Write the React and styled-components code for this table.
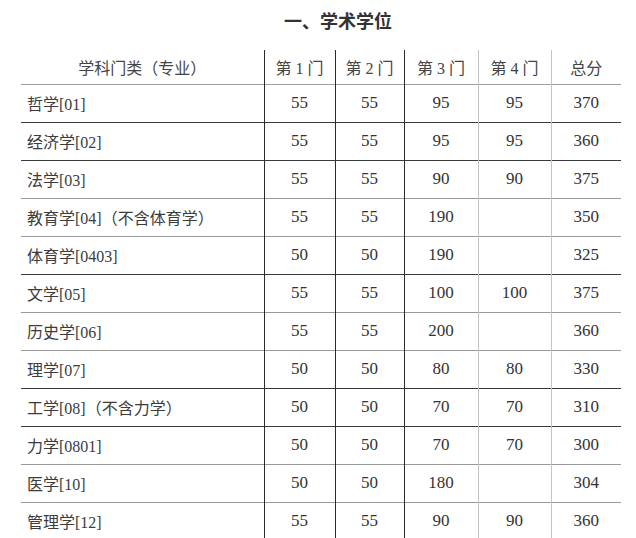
import React from "react";
import styled, { createGlobalStyle } from "styled-components";

const rows = [
    { name: "哲学[01]", s: ["55", "55", "95", "95", "370"], line: "dark" },
    { name: "经济学[02]", s: ["55", "55", "95", "95", "360"], line: "dark" },
    { name: "法学[03]", s: ["55", "55", "90", "90", "375"], line: "gray" },
    { name: "教育学[04]（不含体育学）", s: ["55", "55", "190", "", "350"], line: "gray" },
    { name: "体育学[0403]", s: ["50", "50", "190", "", "325"], line: "dark" },
    { name: "文学[05]", s: ["55", "55", "100", "100", "375"], line: "gray" },
    { name: "历史学[06]", s: ["55", "55", "200", "", "360"], line: "gray" },
    { name: "理学[07]", s: ["50", "50", "80", "80", "330"], line: "dark" },
    { name: "工学[08]（不含力学）", s: ["50", "50", "70", "70", "310"], line: "dark" },
    { name: "力学[0801]", s: ["50", "50", "70", "70", "300"], line: "gray" },
    { name: "医学[10]", s: ["50", "50", "180", "", "304"], line: "gray" },
    { name: "管理学[12]", s: ["55", "55", "90", "90", "360"], line: "light" },
];

const heads = ["第 1 门", "第 2 门", "第 3 门", "第 4 门", "总分"];
const widths = [71, 69, 74, 73, 70];

const lineColors = {
    dark: "#3a3a3a",
    gray: "#9a9a9a",
    light: "#dcdcdc",
};

function App() {
    return (
        <Page>
            <GlobalStyle />
            <Title>一、学术学位</Title>
            <Table>
                <colgroup>
                    <col style={{ width: 243 }} />
                    {widths.map((w, i) => (
                        <col key={i} style={{ width: w }} />
                    ))}
                </colgroup>
                <thead>
                    <HeadRow>
                        <HeadCell>学科门类（专业）</HeadCell>
                        {heads.map((h, i) => (
                            <HeadCell key={h} $soft={i >= 3}>
                                {h}
                            </HeadCell>
                        ))}
                    </HeadRow>
                </thead>
                <tbody>
                    {rows.map((r) => (
                        <Row key={r.name} $line={lineColors[r.line]}>
                            <NameCell>{r.name}</NameCell>
                            {r.s.map((v, i) => (
                                <NumCell key={i} $soft={i >= 3}>
                                    {v}
                                </NumCell>
                            ))}
                        </Row>
                    ))}
                </tbody>
            </Table>
        </Page>
    );
}

export default App;

const serifStack = `"Liberation Serif", "Noto Sans CJK SC", serif`;

const GlobalStyle = createGlobalStyle`
    html, body {
        margin: 0;
        padding: 0;
        background: #fff;
    }
`;

const Page = styled.div`
    width: 636px;
    height: 538px;
    overflow: hidden;
    background: #fff;
    font-family: ${serifStack};
    color: #3c3c3c;
`;

const Title = styled.h1`
    display: flex;
    justify-content: center;
    height: 50px;
    margin: 0;
    padding: 8px 0 0 40px;
    box-sizing: border-box;
    font-family: "Noto Sans CJK SC", sans-serif;
    font-size: 18px;
    font-weight: 700;
    line-height: 24px;
    color: #333;
`;

const Table = styled.table`
    width: 600px;
    margin-left: 21px;
    border-collapse: collapse;
    table-layout: fixed;
    font-family: ${serifStack};
`;

const HeadRow = styled.tr`
    height: 34px;
    border-bottom: 1px solid #a0a0a0;
`;

const cellBorder = (p) =>
    p.$soft ? "border-left: 1px solid #c4c4c4;" : "border-left: 1px solid #2a2a2a;";

const HeadCell = styled.th`
    padding: 0;
    font-family: ${serifStack};
    font-weight: 400;
    font-size: 16px;
    text-align: center;
    vertical-align: middle;
    color: #444;
    &:first-child {
        border-left: none;
    }
    &:not(:first-child) {
        ${cellBorder}
    }
`;

const Row = styled.tr`
    height: 38px;
    border-bottom: 1px solid ${(p) => p.$line};
`;

const NameCell = styled.td`
    padding: 0 0 0 6px;
    font-family: ${serifStack};
    font-size: 16px;
    text-align: left;
    vertical-align: middle;
    white-space: nowrap;
    color: #3c3c3c;
`;

const NumCell = styled.td`
    padding: 0;
    font-family: ${serifStack};
    font-size: 17px;
    text-align: center;
    vertical-align: middle;
    color: #333;
    ${cellBorder}
`;
